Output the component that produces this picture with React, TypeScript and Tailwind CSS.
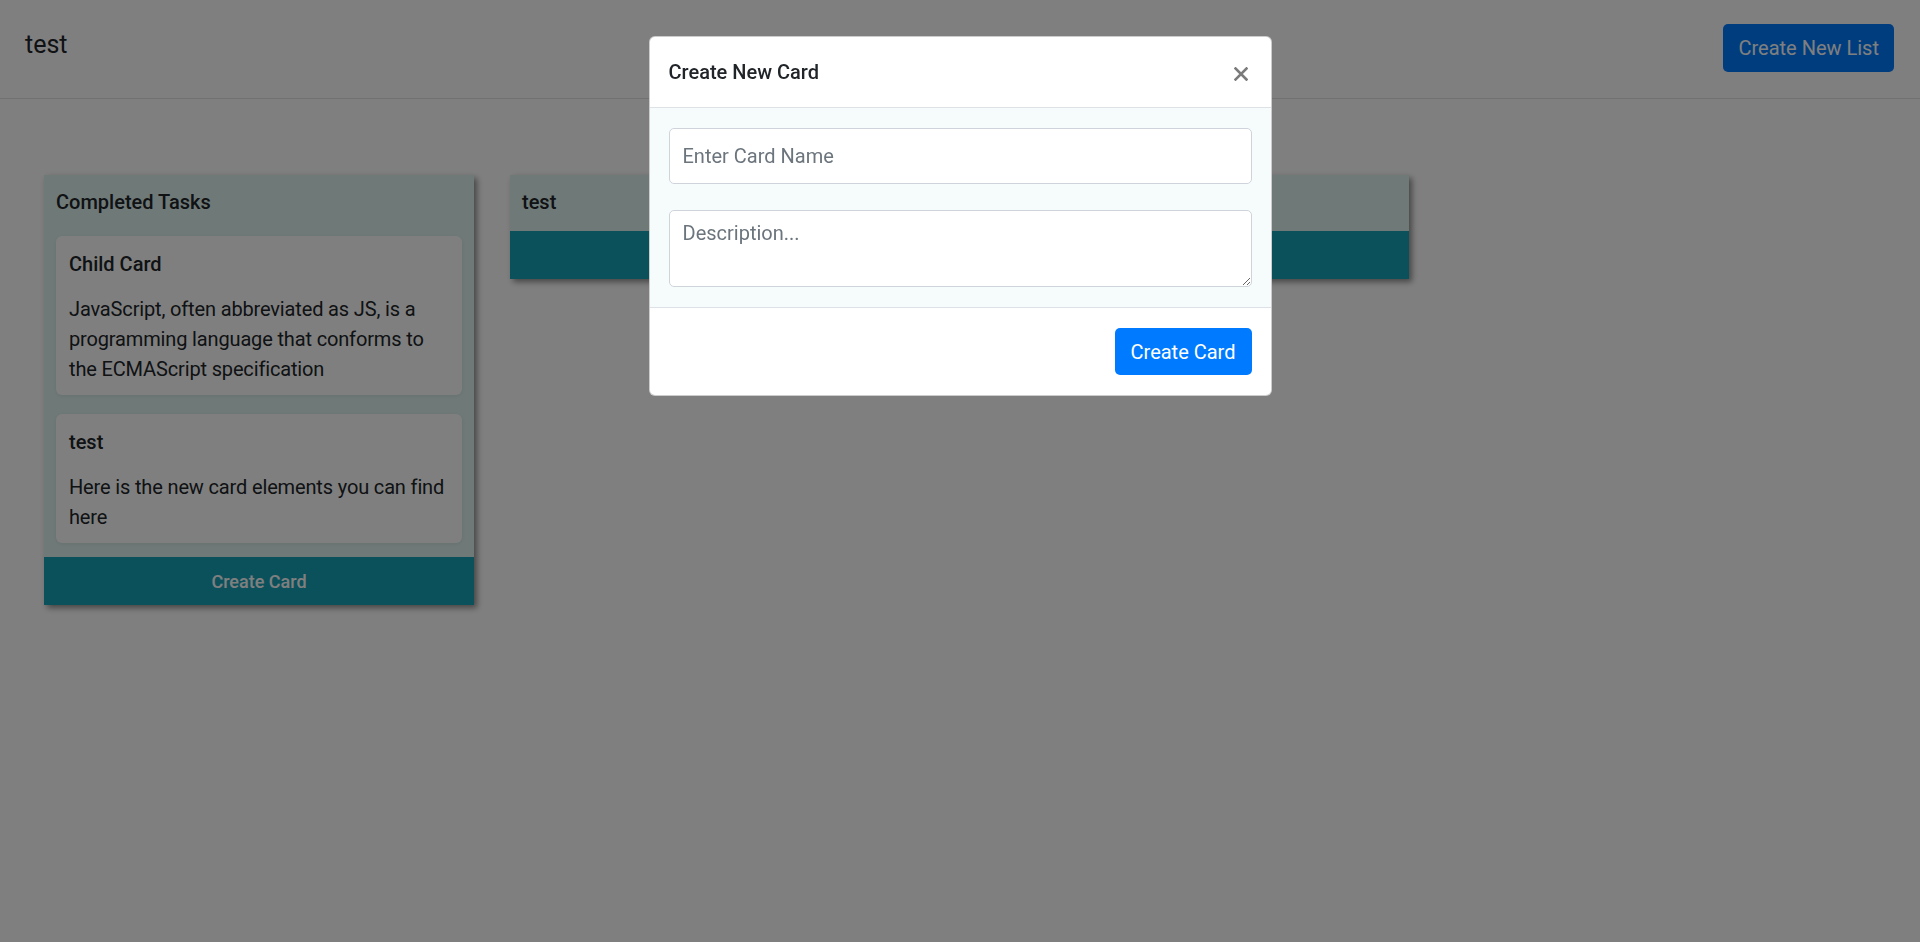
import React from "react";

interface Card {
  title: string;
  body: string;
}

const lists: { title: string; cards: Card[] }[] = [
  {
    title: "Completed Tasks",
    cards: [
      {
        title: "Child Card",
        body: "JavaScript, often abbreviated as JS, is a programming language that conforms to the ECMAScript specification",
      },
      { title: "test", body: "Here is the new card elements you can find here" },
    ],
  },
  { title: "test", cards: [] },
];

function TaskList({ title, cards, wide }: { title: string; cards: Card[]; wide?: boolean }) {
  return (
    <section
      className={
        wide
          ? "w-[899px] shrink-0 bg-[#ddf3f1] shadow-[3px_3px_6px_rgba(0,0,0,0.45)]"
          : "w-[430px] shrink-0 bg-[#ddf3f1] shadow-[3px_3px_6px_rgba(0,0,0,0.45)]"
      }
    >
      <div className="px-[12px] pt-[12px] pb-[14px]">
        <h3 className="text-[20px] leading-[30px] font-medium">{title}</h3>
        {cards.length > 0 && (
          <div className="mt-[19px] flex flex-col gap-[19px]">
            {cards.map((c, i) => (
              <div key={i} className="rounded-[6px] bg-white pl-[13px] pr-[10px] pt-[13px] pb-[11px] shadow-[0_1px_4px_rgba(0,0,0,0.08)]">
                <h4 className="text-[20px] leading-[30px] font-medium">{c.title}</h4>
                <p className="mt-[15px] text-[20px] leading-[30px] tracking-[-0.15px]">{c.body}</p>
              </div>
            ))}
          </div>
        )}
      </div>
      <button className="flex h-[48px] w-full items-center justify-center bg-[#17a2b8] text-[18px] font-medium text-white">
        Create Card
      </button>
    </section>
  );
}

export default function App() {
  return (
    <div className="relative min-h-screen bg-white font-['Roboto','Liberation_Sans',sans-serif] text-[#212529]">
      <header className="flex h-[99px] items-start justify-between border-b border-[#dee2e6] pl-[25px] pr-[26px]">
        <h1 className="mt-[27px] text-[25px] leading-[36px]">test</h1>
        <button className="mt-[24px] h-[48px] rounded-[5px] bg-[#007bff] px-[15px] text-[20px] text-white">
          Create New List
        </button>
      </header>

      <main className="flex items-start gap-[36px] px-[44px] pt-[76px]">
        {lists.map((l, i) => (
          <TaskList key={i} title={l.title} cards={l.cards} wide={i === 1} />
        ))}
      </main>

      {/* Modal backdrop */}
      <div className="fixed inset-0 bg-black/50" />

      {/* Modal */}
      <div className="fixed inset-0 flex justify-center">
        <div className="mt-[36px] h-fit w-[623px] overflow-hidden rounded-[6px] border border-black/20 bg-white">
          <div className="flex items-start justify-between border-b border-[#dee2e6] px-[19px] py-[20px]">
            <h5 className="text-[20px] leading-[30px] font-medium text-[#212529]">Create New Card</h5>
            <button className="mt-[10px] mr-[4px] text-[#7b7b7b]">
              <svg width="14" height="14" viewBox="0 0 14 14" fill="none" stroke="currentColor" strokeWidth="2.6" strokeLinecap="square">
                <path d="M1.5 1.5 L12.5 12.5 M12.5 1.5 L1.5 12.5" />
              </svg>
            </button>
          </div>
          <div className="bg-[#f6fcfc] px-[19px] pt-[20px] pb-[20px]">
            <input
              type="text"
              placeholder="Enter Card Name"
              className="block h-[56px] w-full rounded-[5px] border border-[#ced4da] bg-white px-[13px] text-[20px] text-[#495057] outline-none placeholder:text-[#6c757d]"
            />
            <textarea
              placeholder="Description..."
              className="mt-[26px] block h-[77px] w-full rounded-[5px] border border-[#ced4da] bg-white px-[13px] pt-[7px] text-[20px] leading-[30px] text-[#495057] outline-none placeholder:text-[#6c757d]"
            />
          </div>
          <div className="flex justify-end border-t border-[#dee2e6] px-[19px] py-[20px]">
            <button className="h-[47px] rounded-[5px] bg-[#007bff] px-[16px] text-[20px] text-white">Create Card</button>
          </div>
        </div>
      </div>
    </div>
  );
}
